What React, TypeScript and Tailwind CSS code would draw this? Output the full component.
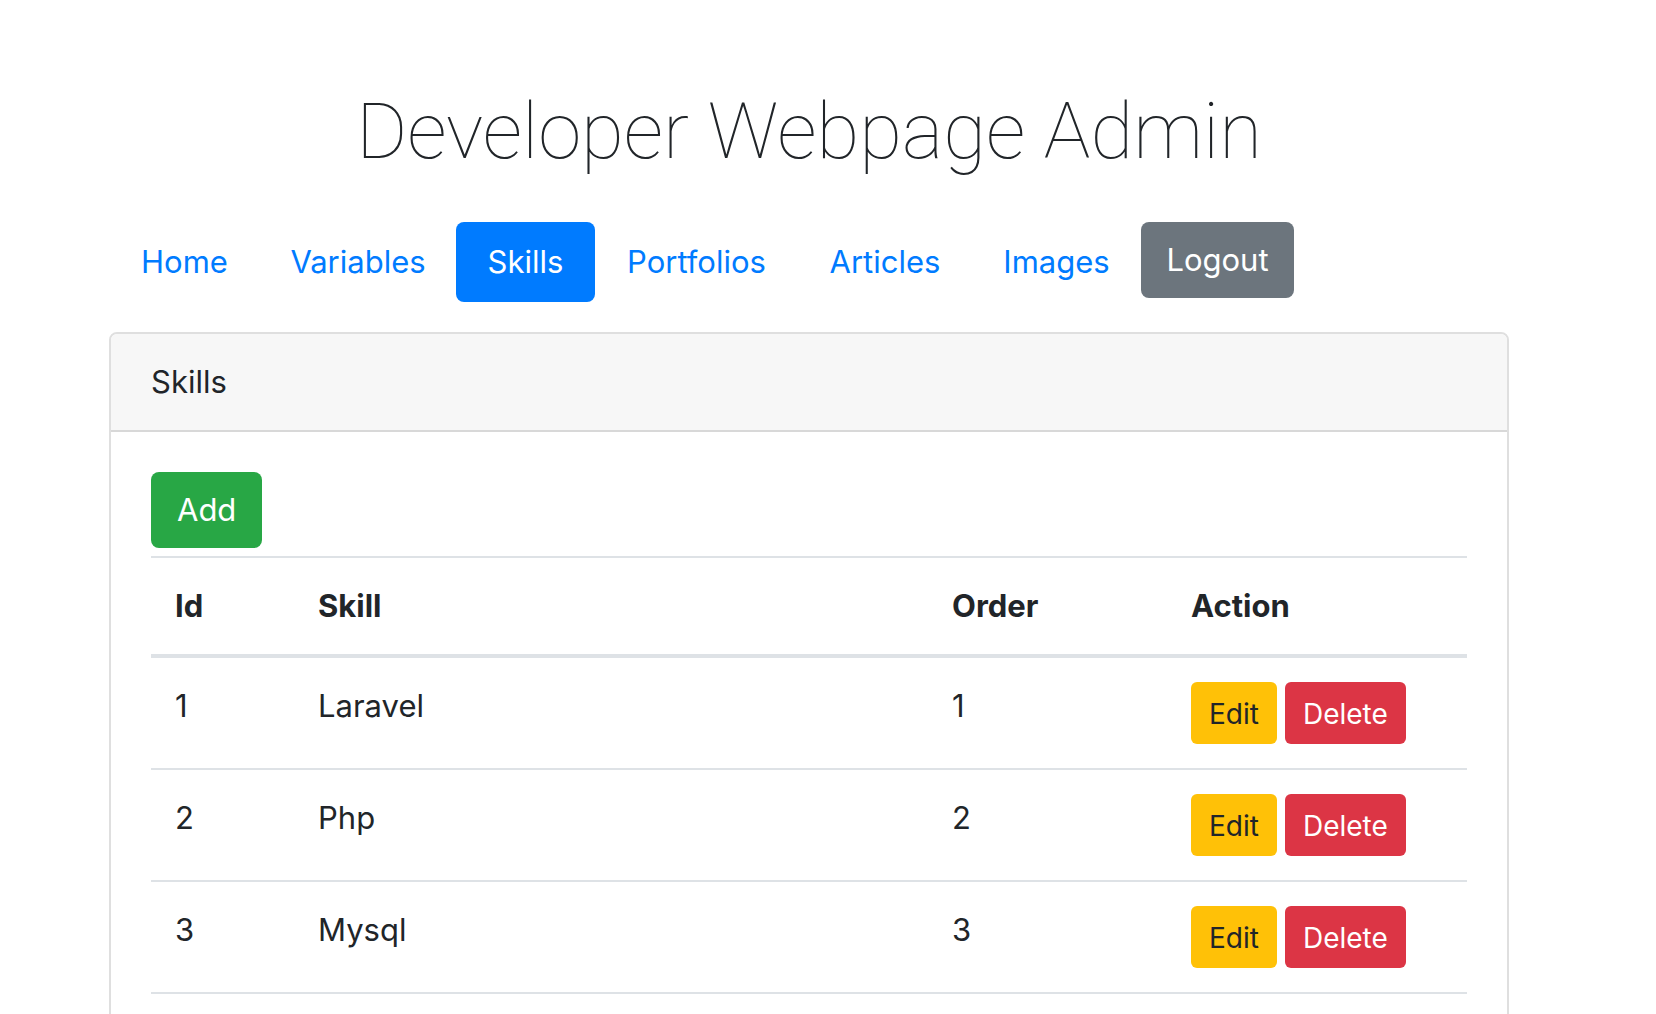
const navItems = ["Home", "Variables", "Skills", "Portfolios", "Articles", "Images"];

const skills = [
  { id: 1, name: "Laravel", order: 1 },
  { id: 2, name: "Php", order: 2 },
  { id: 3, name: "Mysql", order: 3 },
];

function Nav({ active }: { active: string }) {
  return (
    <nav className="mt-[42px] grid grid-cols-[151px_196px_139px_203px_174px_169px_153px] items-start text-center">
      {navItems.map((item) => (
        <a
          key={item}
          href={`#${item.toLowerCase()}`}
          className={
            item === active
              ? "rounded-lg bg-[#007bff] py-4 text-white"
              : "rounded-lg py-4 text-[#007bff]"
          }
        >
          {item}
        </a>
      ))}
      <button type="button" className="rounded-lg bg-[#6c757d] py-[14px] text-white">
        Logout
      </button>
    </nav>
  );
}

function SkillsTable() {
  return (
    <table className="mt-2 w-full table-fixed text-left">
      <colgroup>
        <col className="w-[143px]" />
        <col />
        <col className="w-[239px]" />
        <col className="w-[300px]" />
      </colgroup>
      <thead>
        <tr className="border-t-2 border-b-4 border-[#dee2e6]">
          <th className="p-6">Id</th>
          <th className="p-6">Skill</th>
          <th className="p-6">Order</th>
          <th className="p-6">Action</th>
        </tr>
      </thead>
      <tbody>
        {skills.map((skill) => (
          <tr key={skill.id} className="border-b-2 border-[#dee2e6] align-top">
            <td className="p-6">{skill.id}</td>
            <td className="p-6">{skill.name}</td>
            <td className="p-6">{skill.order}</td>
            <td className="p-6">
              <div className="flex gap-2 text-[28px] leading-[42px]">
                <button type="button" className="rounded-md bg-[#ffc107] px-[18px] pt-[11px] pb-[9px]">
                  Edit
                </button>
                <button
                  type="button"
                  className="rounded-md bg-[#dc3545] px-[18px] pt-[11px] pb-[9px] text-white"
                >
                  Delete
                </button>
              </div>
            </td>
          </tr>
        ))}
      </tbody>
    </table>
  );
}

export default function App() {
  return (
    <div className="h-screen overflow-hidden bg-white pr-[147px] pl-[109px] font-['Inter',sans-serif] text-[31px] leading-[48px] text-[#212529]">
      <h1 className="pt-[84px] text-center font-['Roboto',sans-serif] text-[78px] leading-[96px] font-thin">
        Developer Webpage Admin
      </h1>
      <Nav active="Skills" />
      <main className="mt-[30px] min-h-screen rounded-lg border-2 border-[#dfdfdf]">
        <h2 className="rounded-t-md border-b-2 border-[#d8d8d8] bg-[#f7f7f7] px-10 py-6">Skills</h2>
        <div className="p-10">
          <button type="button" className="block rounded-lg bg-[#28a745] px-[26px] py-[14px] text-white">
            Add
          </button>
          <SkillsTable />
        </div>
      </main>
    </div>
  );
}
